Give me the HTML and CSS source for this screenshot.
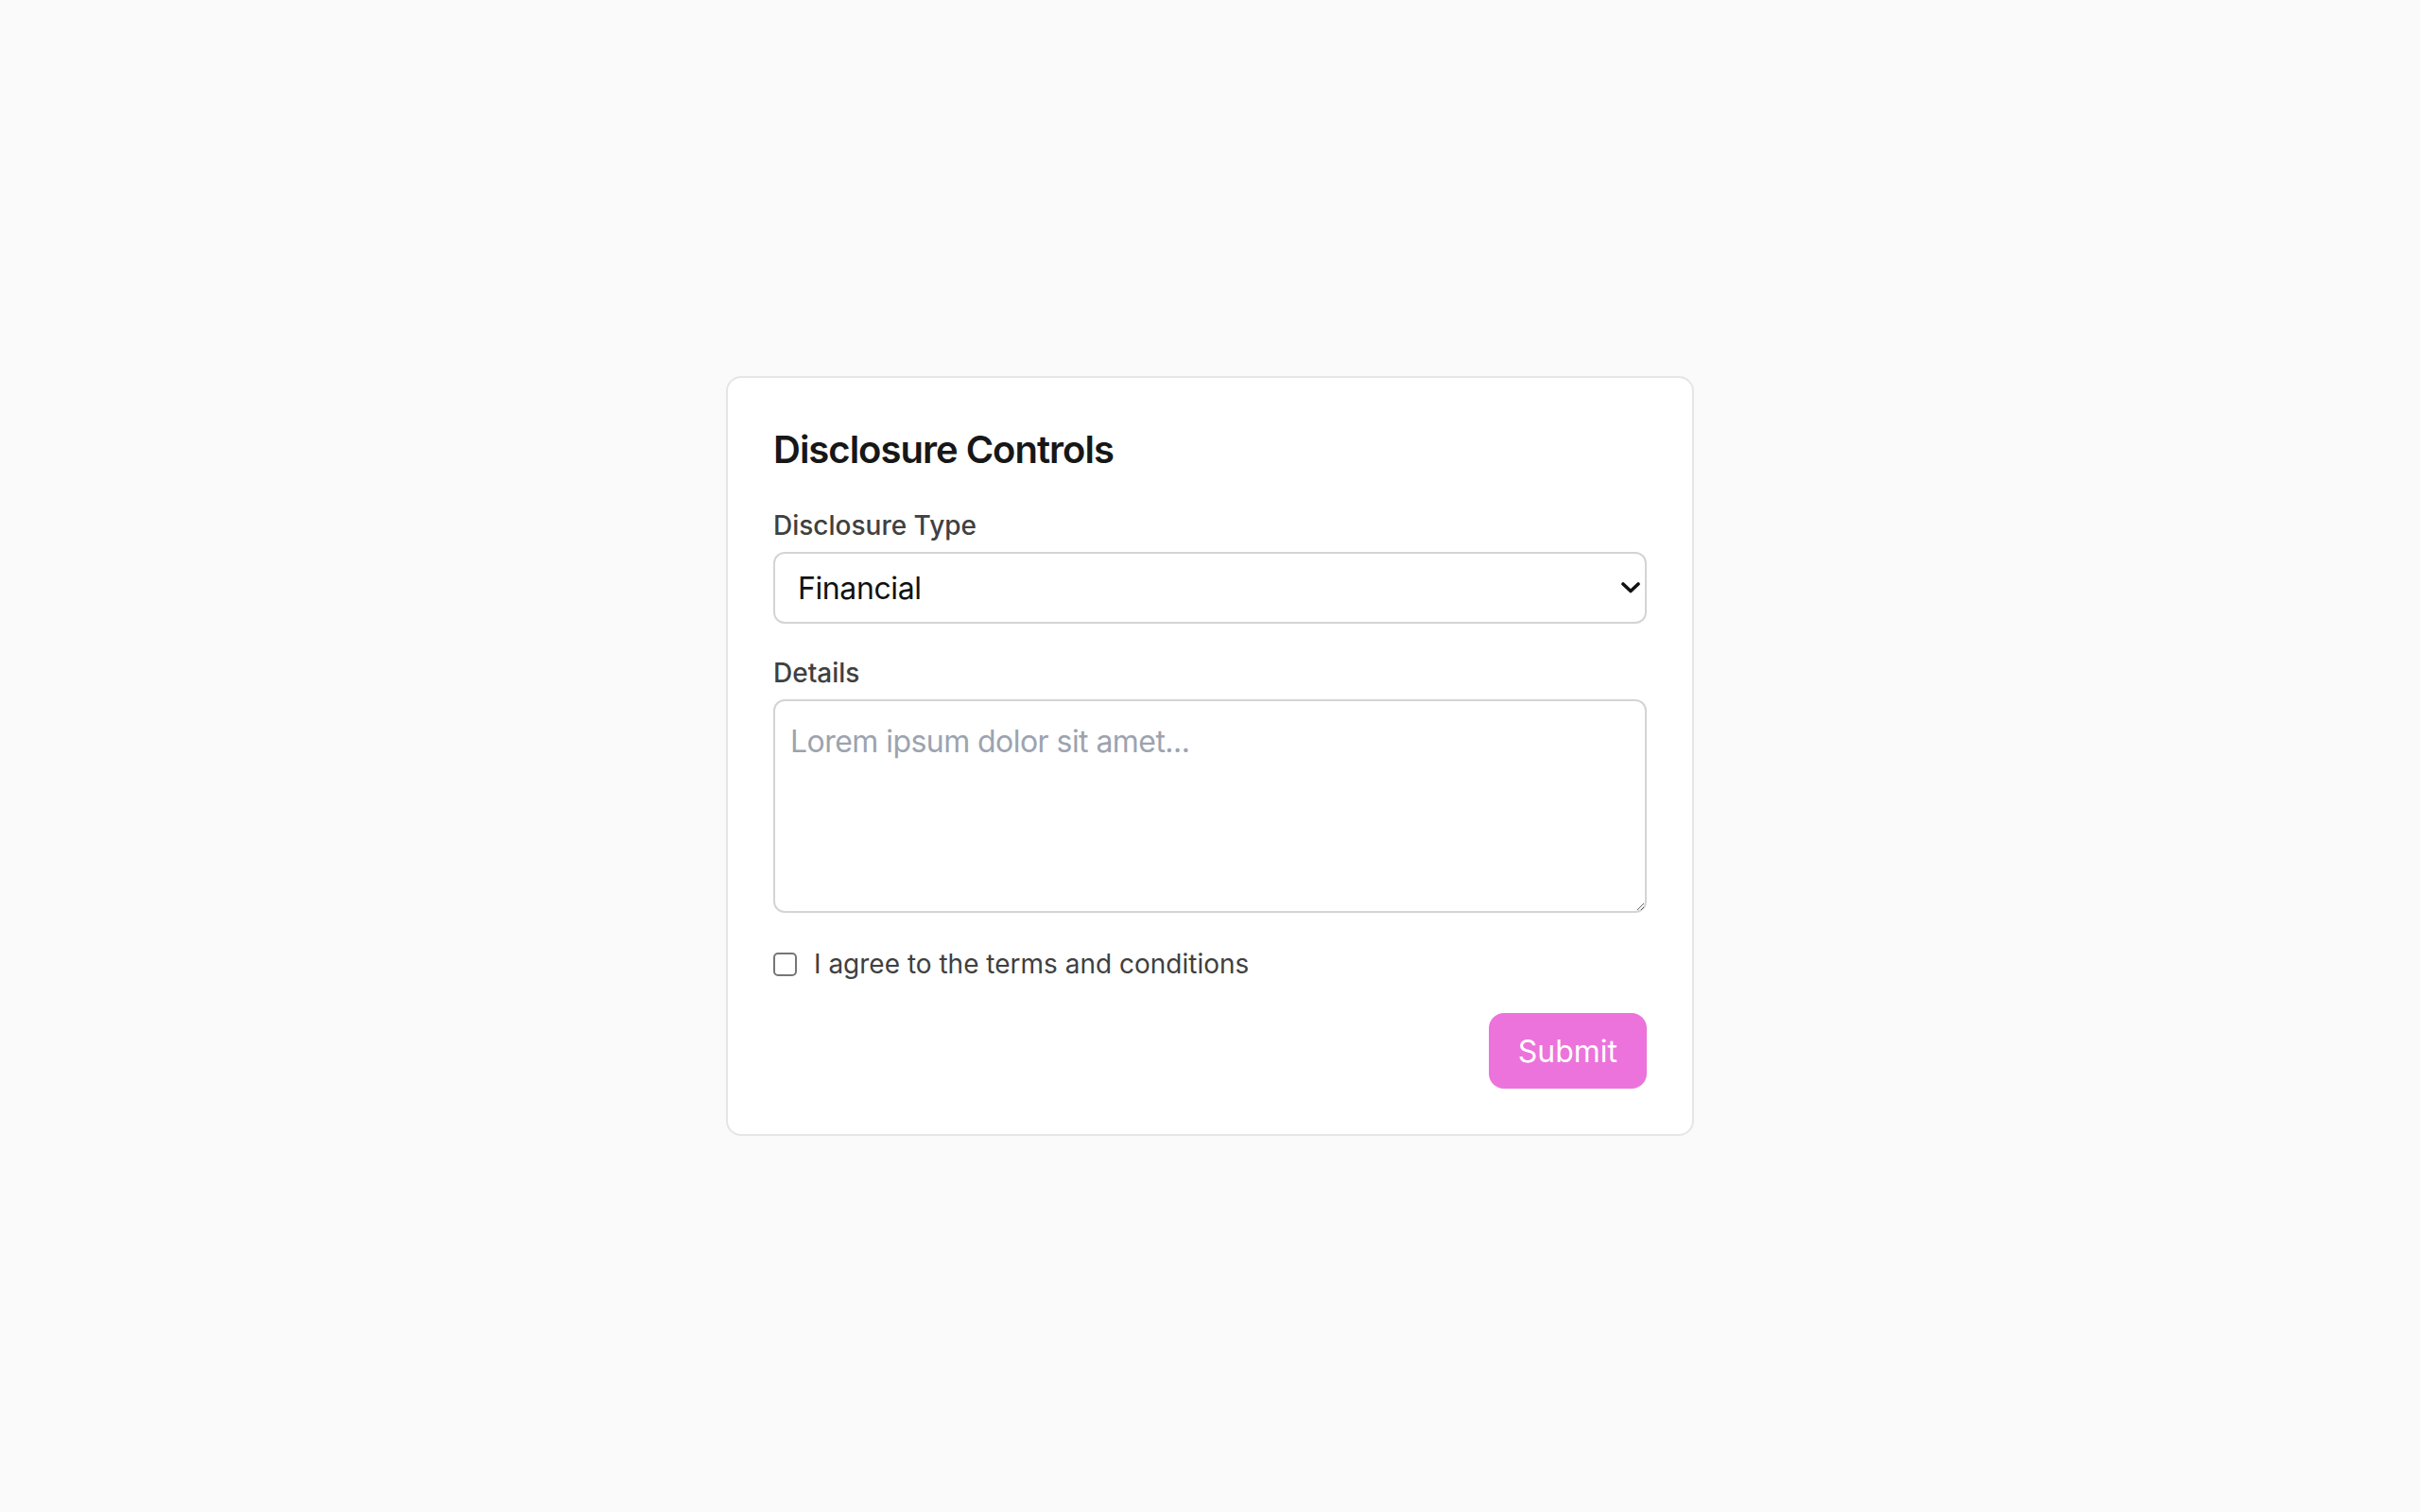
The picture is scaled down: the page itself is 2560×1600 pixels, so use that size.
FILE: index.html
```html
<!DOCTYPE html>
<html lang="en">
<head>
<meta charset="utf-8">
<title>Disclosure Controls</title>
<link rel="stylesheet" href="styles.css">
</head>
<body>
<main class="page">
  <form class="card">
    <h1 class="title">Disclosure Controls</h1>
    <div class="field">
      <label class="label" for="type">Disclosure Type</label>
      <div class="select-wrap">
        <select id="type" class="select">
          <option>Financial</option>
          <option>Legal</option>
          <option>Operational</option>
        </select>
        <svg class="chevron" viewBox="0 0 20 12" width="20" height="12" aria-hidden="true">
          <path d="M2 2 L10 9.5 L18 2" fill="none" stroke="#111" stroke-width="3.6" stroke-linecap="round" stroke-linejoin="round"/>
        </svg>
      </div>
    </div>
    <div class="field">
      <label class="label" for="details">Details</label>
      <textarea id="details" class="textarea" placeholder="Lorem ipsum dolor sit amet..."></textarea>
    </div>
    <div class="field check-row">
      <input type="checkbox" id="agree" class="checkbox">
      <label for="agree" class="check-label">I agree to the terms and conditions</label>
    </div>
    <div class="actions">
      <button type="button" class="btn">Submit</button>
    </div>
  </form>
</main>
</body>
</html>
```
FILE: styles.css
```css
* { box-sizing: border-box; }
html, body { margin: 0; padding: 0; }
body {
  background: #fafafa;
  font-family: Inter, "Noto Sans", "Liberation Sans", sans-serif;
  color: #404040;
}
.page {
  min-height: 100vh;
  display: flex;
  align-items: center;
  justify-content: center;
}
.card {
  width: 1024px;
  background: #ffffff;
  border: 2px solid #e5e5e5;
  border-radius: 16px;
  padding: 48px;
}
.title {
  margin: 0 0 32px;
  font-size: 40px;
  line-height: 56px;
  font-weight: 600;
  color: #171717;
  letter-spacing: -1px;
}
.field { margin-bottom: 32px; }
.label {
  display: block;
  font-size: 28px;
  line-height: 40px;
  font-weight: 500;
  color: #404040;
  margin-bottom: 8px;
}
.select-wrap { position: relative; }
.select {
  -webkit-appearance: none;
  appearance: none;
  display: block;
  width: 100%;
  height: 76px;
  padding: 0 60px 0 24px;
  border: 2px solid #d4d4d4;
  border-radius: 12px;
  background: #ffffff;
  font-family: inherit;
  font-size: 32px;
  letter-spacing: -0.4px;
  color: #111111;
  outline: none;
}
.chevron {
  position: absolute;
  right: 7px;
  top: 32px;
  pointer-events: none;
}
.textarea {
  display: block;
  width: 100%;
  height: 226px;
  padding: 19px 16px 12px;
  border: 2px solid #d4d4d4;
  border-radius: 12px;
  font-family: inherit;
  font-size: 32px;
  line-height: 48px;
  letter-spacing: -0.55px;
  color: #111111;
  resize: vertical;
  outline: none;
}
.textarea::placeholder { color: #9ca3af; }
.check-row {
  display: flex;
  align-items: center;
  height: 42px;
  padding-top: 2px;
}
.checkbox {
  -webkit-appearance: none;
  appearance: none;
  width: 25px;
  height: 25px;
  margin: 0 18px 0 0;
  border: 2px solid #767676;
  border-radius: 5px;
  background: #ffffff;
  flex: none;
}
.checkbox:checked { background: #ec72da; border-color: #ec72da; }
.check-label {
  font-size: 28px;
  line-height: 40px;
  color: #404040;
}
.actions {
  display: flex;
  justify-content: flex-end;
}
.btn {
  height: 80px;
  padding: 0 31px;
  border: none;
  border-radius: 16px;
  background: #ec73db;
  color: #ffffff;
  font-family: inherit;
  font-size: 32px;
  cursor: pointer;
}
```
